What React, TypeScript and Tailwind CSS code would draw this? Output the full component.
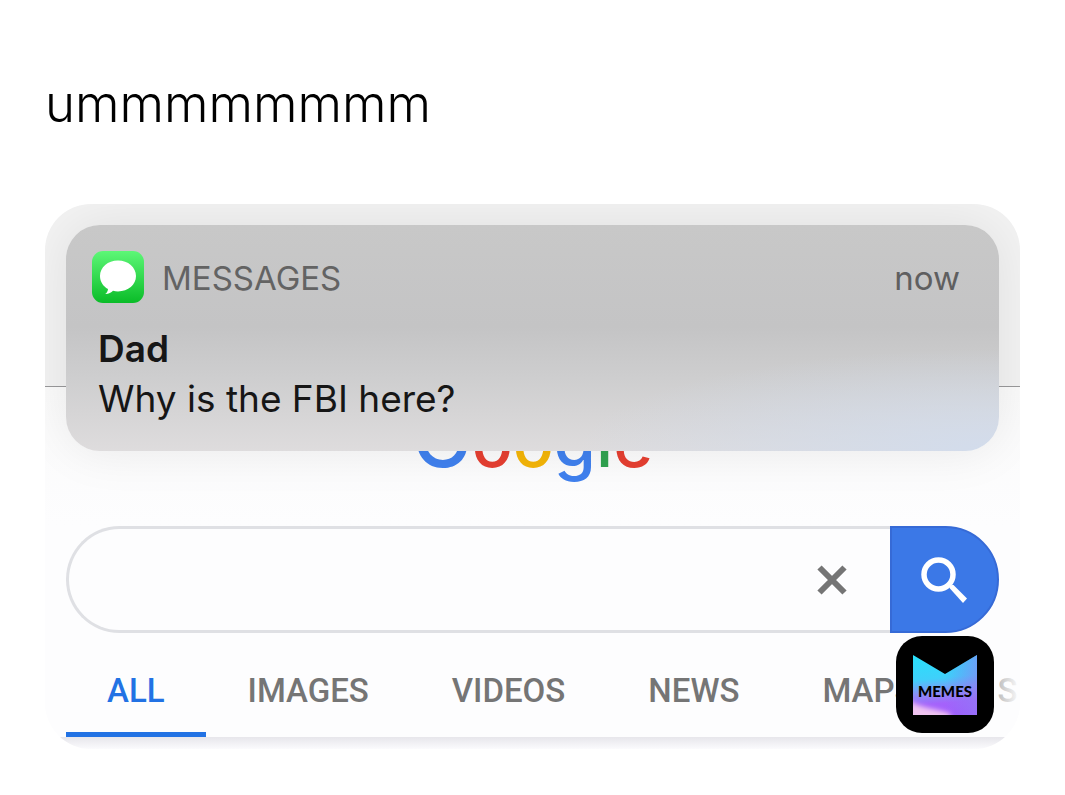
import React from 'react';

interface Tab {
  label: string;
  name?: string;
  active?: boolean;
}

const tabs: Tab[] = [
  { label: 'ALL', active: true },
  { label: 'IMAGES' },
  { label: 'VIDEOS' },
  { label: 'NEWS' },
  { label: 'MAPS' },
  { label: 'S', name: 'Shopping' },
];

const MessagesIcon: React.FC = () => (
  <svg viewBox="0 0 52 52" className="size-[52px] shrink-0" aria-hidden="true">
    <defs>
      <linearGradient id="messages-green" x1="0" y1="0" x2="0" y2="1">
        <stop offset="0" stopColor="#5df777" />
        <stop offset="1" stopColor="#0abc28" />
      </linearGradient>
    </defs>
    <rect width="52" height="52" rx="11" fill="url(#messages-green)" />
    <path
      d="M26 9.500C15.800 9.500 8 16.300 8 25c0 5.600 3 10.300 8 13-.2 2-1 3.700-2.700 5 3.200.1 6-1.200 7.700-3.200 1.600.4 3.200.6 5 .6 10.200 0 18-6.700 18-15.400S36.200 9.500 26 9.500z"
      fill="#fff"
    />
  </svg>
);

const CloseIcon: React.FC = () => (
  <svg viewBox="0 0 30 30" className="size-[30px]" aria-hidden="true">
    <path d="M2.500 2.500l25 25M27.500 2.500l-25 25" stroke="#757575" strokeWidth="6" fill="none" />
  </svg>
);

const SearchIcon: React.FC = () => (
  <svg viewBox="0 0 48 48" className="size-12" aria-hidden="true">
    <circle cx="17.500" cy="18.500" r="14.500" stroke="#fff" strokeWidth="5.500" fill="none" />
    <path d="M28.500 32c.3-2.500 1.500-3.500 4-3l13.500 13.500-4 4.500z" fill="#fff" />
  </svg>
);

const MemesBadge: React.FC = () => (
  <div className="absolute right-[26px] bottom-4 flex h-[97px] w-[98px] items-center justify-center rounded-[26px] bg-black">
    <svg viewBox="0 0 64 60" className="h-[60px] w-16" role="img" aria-label="Memes">
      <defs>
        <linearGradient id="memes-fill" x1="0.4" y1="0" x2="0.5" y2="1">
          <stop offset="0" stopColor="#2ae0fb" />
          <stop offset="0.38" stopColor="#3fd0fa" />
          <stop offset="0.62" stopColor="#8a8ff6" />
          <stop offset="0.8" stopColor="#a463fb" />
          <stop offset="1" stopColor="#a45cfc" />
        </linearGradient>
        <linearGradient id="memes-side" x1="0" y1="0" x2="1" y2="0">
          <stop offset="0.5" stopColor="#7f7cf6" stopOpacity="0" />
          <stop offset="1" stopColor="#8f7cf6" stopOpacity="0.6" />
        </linearGradient>
        <filter id="memes-soft" x="-20%" y="-50%" width="140%" height="200%">
          <feGaussianBlur stdDeviation="2.500" />
        </filter>
        <clipPath id="memes-clip">
          <path d="M0 0l32 19L64 0v60H0z" />
        </clipPath>
      </defs>
      <g clipPath="url(#memes-clip)">
        <rect width="64" height="60" fill="url(#memes-fill)" />
        <rect width="64" height="60" fill="url(#memes-side)" />
        <path d="M-4 45c8 7 22 8 40 13l4 8H-4z" fill="#f0c4f0" filter="url(#memes-soft)" />
      </g>
      <text
        x="32"
        y="42"
        textAnchor="middle"
        className="font-['Lato',sans-serif] text-[15px] font-black"
        fill="#000"
      >
        MEMES
      </text>
    </svg>
  </div>
);

const Notification: React.FC = () => (
  <section className="absolute inset-x-[21px] top-[21px] h-[226px] rounded-[34px] bg-[radial-gradient(ellipse_at_bottom_right,#d2dcec_0%,#d2dcec00_32%),linear-gradient(to_bottom,#c8c8c8_0%,#c4c4c5_45%,#cececf_68%,#dedcdd_100%)] px-[26px] pt-[26px] shadow-[0_0_50px_rgba(0,0,0,0.08)]">
    <header className="flex items-start">
      <MessagesIcon />
      <span className="ml-[18px] text-[33px] leading-[54px] text-[#636363]">MESSAGES</span>
      <time className="mr-[13px] ml-auto text-[33px] leading-[54px] text-[#5f5f60]">now</time>
    </header>
    <div className="mt-[19px] ml-1.5 text-[37px] leading-[50px] text-[#161616]">
      <h2 className="font-semibold">Dad</h2>
      <p>Why is the FBI here?</p>
    </div>
  </section>
);

const Logo: React.FC = () => (
  <div className="flex h-[139px] items-baseline justify-center bg-linear-to-b from-[#fafafa] to-[#fdfdfe] pt-[11px] text-[68px] leading-[80px] font-medium">
    <span className="text-[80px] text-[#4081ee]">G</span>
    <span className="text-[#e63f31]">o</span>
    <span className="text-[#f4b508]">o</span>
    <span className="text-[#4081ee]">g</span>
    <span className="text-[#30a350]">l</span>
    <span className="text-[#e63f31]">e</span>
  </div>
);

const SearchBar: React.FC = () => (
  <form className="mx-[21px] flex h-[107px]" onSubmit={(e) => e.preventDefault()}>
    <div className="flex min-w-0 flex-1 items-center rounded-l-full border-[3px] border-r-0 border-[#dfe0e4] pr-[43px] pl-10">
      <input
        type="text"
        aria-label="Search"
        className="h-full min-w-0 flex-1 bg-transparent text-[33px] text-[#161616] outline-none"
      />
      <button type="button" aria-label="Clear">
        <CloseIcon />
      </button>
    </div>
    <button
      type="submit"
      aria-label="Search"
      className="flex w-[109px] items-center justify-center rounded-r-full border-2 border-[#366ad6] bg-[#3b78e7]"
    >
      <SearchIcon />
    </button>
  </form>
);

const TabBar: React.FC = () => (
  <nav className="relative flex h-[104px] gap-px overflow-hidden pl-[21px] font-['Roboto',sans-serif] text-[33px] leading-[40px] font-medium">
    {tabs.map((tab) => (
      <a
        key={tab.label}
        href="#"
        aria-label={tab.name}
        className={`shrink-0 px-[41px] pt-[38px] ${
          tab.active ? 'border-b-[5px] border-[#2272e4] text-[#2272e4]' : 'text-[#757575]'
        }`}
      >
        {tab.label}
      </a>
    ))}
    <div className="pointer-events-none absolute inset-y-0 right-0 w-12 bg-linear-to-r from-transparent to-[#fdfdfe]" />
  </nav>
);

const App: React.FC = () => {
  return (
    <main className="min-h-screen bg-white px-[45px] pt-[68px] font-['Inter',sans-serif]">
      <h1 className="text-[51px] leading-[72px] font-light text-black">ummmmmmmm</h1>
      <article className="relative mt-16 overflow-hidden rounded-[46px] bg-[#fdfdfe]">
        <div className="h-[183px] border-b border-[#98989a] bg-[#f2f2f2]" />
        <Logo />
        <Notification />
        <SearchBar />
        <TabBar />
        <div className="h-3 bg-linear-to-b from-[#e7e6eb] to-[#fbfbfd]" />
        <MemesBadge />
      </article>
    </main>
  );
};

export default App;
